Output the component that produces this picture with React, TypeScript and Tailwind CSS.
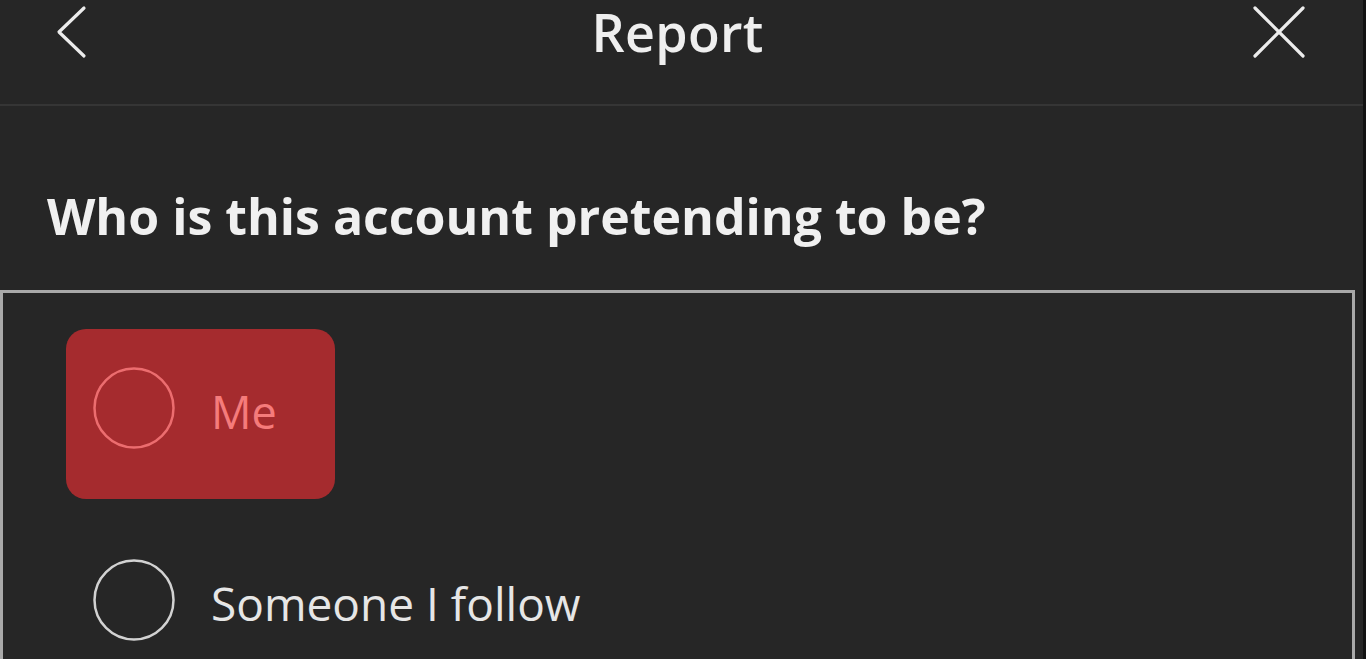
import React from "react"

const font = { fontFamily: '"Open Sans", "Noto Sans", sans-serif' }

function BackIcon() {
  return (
    <svg width="32" height="54" viewBox="0 0 32 54" fill="none">
      <polyline
        points="28,3 3,27 28,51"
        stroke="#ececec"
        strokeWidth="3.2"
        strokeLinecap="round"
        strokeLinejoin="round"
      />
    </svg>
  )
}

function CloseIcon() {
  return (
    <svg width="54" height="54" viewBox="0 0 54 54" fill="none">
      <path d="M3 3 L51 51 M51 3 L3 51" stroke="#ececec" strokeWidth="3.2" strokeLinecap="round" />
    </svg>
  )
}

function Radio({ color }: { color: string }) {
  return (
    <svg width="82" height="82" viewBox="0 0 82 82" fill="none" className="shrink-0">
      <circle cx="41" cy="41" r="39.5" stroke={color} strokeWidth="2.5" />
    </svg>
  )
}

export default function App() {
  return (
    <div className="flex h-[659px] w-full overflow-hidden bg-[#262626]" style={font}>
      <div className="flex flex-1 flex-col">
        {/* Header */}
        <div className="flex h-[106px] shrink-0 items-start justify-between border-b-2 border-[#353535]">
          <button className="mt-[5px] ml-[56px] flex h-[54px] items-center">
            <BackIcon />
          </button>
          <h1 className="pl-[15px] text-[52px] leading-[64px] font-semibold tracking-[0.3px] text-[#efefef]">
            Report
          </h1>
          <button className="mt-[5px] mr-[57px] flex h-[54px] items-center">
            <CloseIcon />
          </button>
        </div>

        {/* Question */}
        <h2 className="mt-[80px] pl-[47px] text-[50px] leading-[60px] font-bold text-[#f0f0f0]">
          Who is this account pretending to be?
        </h2>

        {/* Options */}
        <div className="mt-[44px] mr-[8px] flex flex-1 flex-col gap-[16px] border-[3px] border-b-0 border-[#a9a9a9] pt-[36px] pl-[63px]">
          <div className="flex h-[170px] w-[269px] items-center gap-[36px] rounded-[20px] bg-[#a52b2e] pb-[12px] pl-[27px]">
            <Radio color="#ec6d6f" />
            <span className="pt-[8px] text-[45px] text-[#f57b7b]">Me</span>
          </div>
          <div className="flex h-[170px] items-center gap-[36px] pl-[27px]">
            <Radio color="#d2d2d2" />
            <span className="pt-[6px] text-[46px] text-[#e6e6e6]">Someone I follow</span>
          </div>
        </div>
      </div>
      <div className="w-[3px] shrink-0 bg-[#121212]" />
    </div>
  )
}
